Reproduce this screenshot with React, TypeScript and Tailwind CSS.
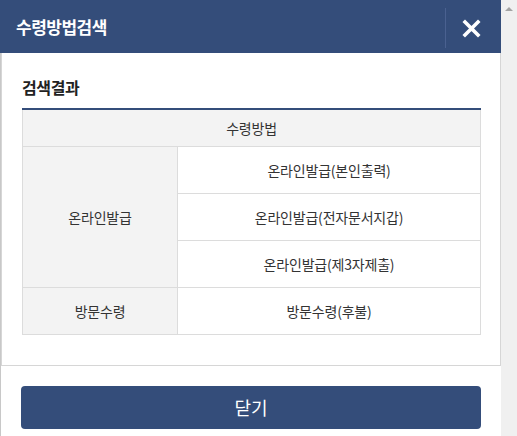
import React from "react";

const font = { fontFamily: '"Noto Sans CJK KR", "Noto Sans", sans-serif' };

export default function App() {
  return (
    <div className="flex w-[517px] h-[436px] overflow-hidden bg-white" style={font}>
      <div className="w-[501px] flex flex-col">
        {/* header */}
        <div className="h-[53px] shrink-0 bg-[#344d7a] flex items-center relative">
          <div className="pl-4 text-white text-[17px] font-bold tracking-[-0.5px] leading-none">수령방법검색</div>
          <div className="absolute left-[445px] top-[8px] h-[40px] w-px bg-[#4a6190]" />
          <div className="absolute left-[462px] top-[19px]">
            <svg width="19" height="19" viewBox="0 0 19 19">
              <path d="M3 3 L16 16 M16 3 L3 16" stroke="white" strokeWidth="3.6" strokeLinecap="square" />
            </svg>
          </div>
        </div>
        {/* body */}
        <div className="border-l border-[#c8c8c8] flex-1 flex flex-col">
          <div className="h-[313px] border-r border-b border-l border-[#d6d6d6] pl-[20px] pr-[19px]">
            <div className="h-[55px] flex items-center pt-[13px]">
              <span className="text-[16px] font-bold text-[#222] tracking-[-0.4px]">검색결과</span>
            </div>
            <div className="border-t-2 border-[#344d7a] text-[14px] text-[#333] tracking-[-0.2px]">
              <div className="h-[37px] border-x border-b border-[#dcdcdc] bg-[#f3f3f3] flex items-center justify-center">
                수령방법
              </div>
              <div className="flex">
                <div className="w-[156px] h-[141px] border-x border-b border-[#dcdcdc] bg-[#f3f3f3] flex items-center justify-center">
                  온라인발급
                </div>
                <div className="flex-1 flex flex-col">
                  <div className="h-[47px] border-r border-b border-[#dcdcdc] flex items-center justify-center">온라인발급(본인출력)</div>
                  <div className="h-[47px] border-r border-b border-[#dcdcdc] flex items-center justify-center">온라인발급(전자문서지갑)</div>
                  <div className="h-[47px] border-r border-b border-[#dcdcdc] flex items-center justify-center">온라인발급(제3자제출)</div>
                </div>
              </div>
              <div className="flex">
                <div className="w-[156px] h-[47px] border-x border-b border-[#dcdcdc] bg-[#f3f3f3] flex items-center justify-center">
                  방문수령
                </div>
                <div className="flex-1 h-[47px] border-r border-b border-[#dcdcdc] flex items-center justify-center">방문수령(후불)</div>
              </div>
            </div>
          </div>
          <div className="pl-[20px] pt-[20px]">
            <button className="w-[460px] h-[43px] rounded-[4px] bg-[#344d7a] text-white text-[18px] flex items-center justify-center">
              닫기
            </button>
          </div>
        </div>
      </div>
      {/* scrollbar */}
      <div className="w-[16px] h-full bg-[#f0f0f0] flex justify-center pt-[7px]">
        <div className="w-0 h-0 border-l-[4px] border-r-[4px] border-b-[4px] border-l-transparent border-r-transparent border-b-[#a3a3a3]" />
      </div>
    </div>
  );
}
